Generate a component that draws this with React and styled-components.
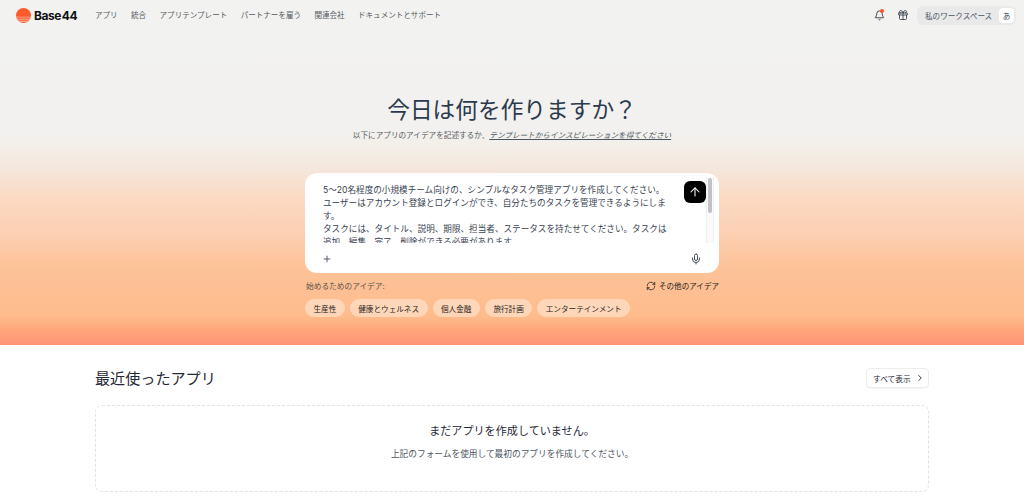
import React from 'react';
import styled, { createGlobalStyle } from 'styled-components';
import { Bell, Gift, ArrowUp, Plus, Mic, RefreshCw, ChevronRight } from 'lucide-react';

const Global = createGlobalStyle`
  html, body { margin: 0; padding: 0; background: #fff; overflow: hidden; }
  body { font-family: Inter, "Noto Sans CJK JP", sans-serif; color: #1f2937; }
  * { box-sizing: border-box; }
`;
const Page = styled.div`width: 1024px; height: 500px; overflow: hidden; display: flex; flex-direction: column;`;
const Hero = styled.section`
  height: 345px; flex: none; display: flex; flex-direction: column; align-items: center;
  background: linear-gradient(180deg, #f2f2f1 0%, #f2f1ef 38%, #f3efe9 42%, #f6e5d9 50%, #fbdac3 57%, #fcd0b4 67%, #fdc298 78%, #febc8c 91.6%, #ffa67a 95.6%, #ff9478 100%);
`;
const Header = styled.header`
  width: 100%; height: 30px; display: flex; align-items: center; padding: 0 8px 0 16px;
`;
const Brand = styled.div`display: flex; align-items: center; gap: 3px; width: 79px;`;
const BrandName = styled.span`font-size: 12px; font-weight: 700; letter-spacing: -0.45px; color: #111; word-spacing: -1.6px;`;
const Nav = styled.nav`display: flex; gap: 13.4px; align-items: center; margin-top: -1px;`;
const NavLink = styled.a`font-size: 7.55px; font-weight: 400; color: #555a61;`;
const Right = styled.div`margin-left: auto; display: flex; align-items: center;`;
const IconSlot = styled.span`
  position: relative; width: 24px; display: flex; justify-content: center; color: #1f2937;
`;
const Dot = styled.i`
  position: absolute; top: -1px; left: 13px; width: 4px; height: 4px; border-radius: 50%; background: #ff4d24;
`;
const Workspace = styled.div`
  margin-left: 2px; width: 99px; height: 19px; border-radius: 6px; background: #e9e9e9;
  display: flex; align-items: center; justify-content: space-between; padding: 0 2px 0 8px;
`;
const WorkspaceName = styled.span`font-size: 7.6px; color: #4b5563;`;
const Avatar = styled.span`
  width: 15px; height: 15px; border-radius: 4px; background: #fff; font-size: 7.5px;
  display: flex; align-items: center; justify-content: center; color: #374151;
`;
const Title = styled.h1`
  margin: 65px 0 0; font-size: 22.7px; line-height: 30px; font-weight: 400; color: #2b3a4d;
`;
const Sub = styled.p`
  margin: 5px 0 0; font-size: 7.62px; line-height: 12px; color: #555a61;
  a { font-style: italic; text-decoration: underline; color: #4b5563; }
`;
const Card = styled.div`
  margin-top: 31px; width: 414px; height: 100px; background: #fff; border-radius: 12px;
  position: relative; flex: none; display: flex; flex-direction: column;
`;
const Prompt = styled.div`
  margin: 11px 0 0 18px; width: 350px; height: 59px; overflow: hidden;
  font-size: 8.6px; line-height: 13px; color: #374151; white-space: pre-line;
`;
const Send = styled.button`
  position: absolute; top: 8px; right: 13px; width: 22px; height: 22px; border: 0; padding: 0;
  border-radius: 6px; background: #000; color: #fff; display: flex; align-items: center; justify-content: center;
`;
const Track = styled.div`
  position: absolute; top: 4px; right: 5px; width: 8px; height: 66px; background: #fafafa;
  border-left: 1px solid #f0f0f0; border-right: 1px solid #f0f0f0;
`;
const Thumb = styled.div`
  margin: 1px 0 0 1px; width: 4px; height: 35px; border-radius: 2px; background: #c2c2c2;
`;
const CardBar = styled.div`
  margin-top: auto; height: 29px; display: flex; align-items: center; justify-content: space-between;
  padding: 0 17px 0 17px; color: #374151;
`;
const Ideas = styled.div`width: 414px; margin-top: 7px;`;
const IdeaHead = styled.div`display: flex; justify-content: space-between; align-items: center; height: 11px; padding: 0 0 0 1px;`;
const IdeaLabel = styled.span`font-size: 7.7px; color: #57534e;`;
const More = styled.span`display: flex; align-items: center; gap: 3px; font-size: 7.55px; font-weight: 400; color: #1c1917;`;
const Chips = styled.div`display: flex; gap: 5px; margin-top: 8px;`;
const Chip = styled.span`
  height: 18px; padding: 0 8.5px; border-radius: 9px; background: rgba(255,255,255,0.38);
  font-size: 7.6px; font-weight: 400; color: #292524; display: flex; align-items: center;
`;
const Recent = styled.section`padding: 23px 95px 0; display: flex; flex-direction: column;`;
const RecentHead = styled.div`display: flex; justify-content: space-between; align-items: center; height: 20px;`;
const RecentTitle = styled.h2`margin: -2px 0 0; font-size: 15.1px; font-weight: 400; color: #1f2937;`;
const ViewAll = styled.button`
  width: 63px; height: 20px; background: #fff; border: 1px solid #ececec; border-radius: 4px; padding: 0 0 0 6px;
  display: flex; align-items: center; gap: 4px; font: 400 7.7px Inter, "Noto Sans CJK JP", sans-serif; color: #1f2937;
  box-shadow: 0 1px 1px rgba(0,0,0,0.03);
`;
const Empty = styled.div`
  margin-top: 17px; height: 87px; border: 1px dashed #dbe3ec; border-radius: 7px;
  display: flex; flex-direction: column; align-items: center; padding-top: 17px;
`;
const EmptyTitle = styled.h3`margin: 0; font-size: 11.1px; line-height: 16px; font-weight: 400; color: #1f2937;`;
const EmptySub = styled.p`margin: 8px 0 0; font-size: 8.7px; line-height: 14px; color: #4b5563;`;

const Logo = () => (
  <svg width="15" height="15" viewBox="0 0 30 30">
    <defs>
      <clipPath id="sun"><circle cx="15" cy="15" r="15" /></clipPath>
    </defs>
    <g clipPath="url(#sun)">
      <rect width="30" height="30" fill="#ff5a2b" />
      <rect y="17.5" width="30" height="1.4" fill="#ffb79f" />
      <rect y="21.5" width="30" height="1.6" fill="#ffc6b4" />
      <rect y="25.5" width="30" height="1.8" fill="#ffd4c6" />
    </g>
  </svg>
);

const navItems = ['アプリ', '統合', 'アプリテンプレート', 'パートナーを雇う', '関連会社', 'ドキュメントとサポート'];
const chips = ['生産性', '健康とウェルネス', '個人金融', '旅行計画', 'エンターテインメント'];
const prompt = `5〜20名程度の小規模チーム向けの、シンプルなタスク管理アプリを作成してください。
ユーザーはアカウント登録とログインができ、自分たちのタスクを管理できるようにします。
タスクには、タイトル、説明、期限、担当者、ステータスを持たせてください。タスクは追加、編集、完了、削除ができる必要があります。`;

export default function App() {
  return (
    <Page>
      <Global />
      <Hero>
        <Header>
          <Brand><Logo /><BrandName>Base 44</BrandName></Brand>
          <Nav>{navItems.map((n) => <NavLink key={n}>{n}</NavLink>)}</Nav>
          <Right>
            <IconSlot><Bell size={11} strokeWidth={1.8} /><Dot /></IconSlot>
            <IconSlot><Gift size={12} strokeWidth={1.5} /></IconSlot>
            <Workspace><WorkspaceName>私のワークスペース</WorkspaceName><Avatar>あ</Avatar></Workspace>
          </Right>
        </Header>
        <Title>今日は何を作りますか？</Title>
        <Sub>以下にアプリのアイデアを記述するか、<a>テンプレートからインスピレーションを得てください</a></Sub>
        <Card>
          <Prompt>{prompt}</Prompt>
          <Send><ArrowUp size={14} strokeWidth={1.8} /></Send>
          <Track><Thumb /></Track>
          <CardBar><Plus size={10} strokeWidth={2} /><Mic size={12} strokeWidth={1.8} /></CardBar>
        </Card>
        <Ideas>
          <IdeaHead>
            <IdeaLabel>始めるためのアイデア:</IdeaLabel>
            <More><RefreshCw size={10} strokeWidth={1.8} />その他のアイデア</More>
          </IdeaHead>
          <Chips>{chips.map((c) => <Chip key={c}>{c}</Chip>)}</Chips>
        </Ideas>
      </Hero>
      <Recent>
        <RecentHead>
          <RecentTitle>最近使ったアプリ</RecentTitle>
          <ViewAll>すべて表示<ChevronRight size={10} strokeWidth={2.2} /></ViewAll>
        </RecentHead>
        <Empty>
          <EmptyTitle>まだアプリを作成していません。</EmptyTitle>
          <EmptySub>上記のフォームを使用して最初のアプリを作成してください。</EmptySub>
        </Empty>
      </Recent>
    </Page>
  );
}
